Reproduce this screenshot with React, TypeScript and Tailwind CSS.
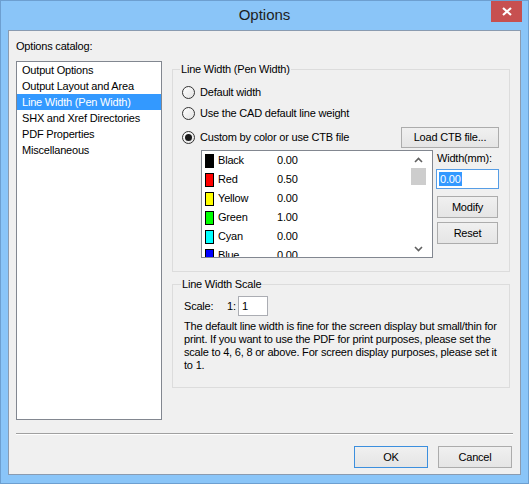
import React from "react";

const catalog = [
  "Output Options",
  "Output Layout and Area",
  "Line Width (Pen Width)",
  "SHX and Xref Directories",
  "PDF Properties",
  "Miscellaneous",
];

const pens = [
  { name: "Black", swatch: "bg-[#000000]", width: "0.00" },
  { name: "Red", swatch: "bg-[#ff0000]", width: "0.50" },
  { name: "Yellow", swatch: "bg-[#ffff00]", width: "0.00" },
  { name: "Green", swatch: "bg-[#00ff00]", width: "1.00" },
  { name: "Cyan", swatch: "bg-[#00ffff]", width: "0.00" },
  { name: "Blue", swatch: "bg-[#0000ff]", width: "0.00" },
];

function Radio({ checked = false }: { checked?: boolean }) {
  return (
    <span className="flex h-[13px] w-[13px] shrink-0 items-center justify-center rounded-full border border-[#333333] bg-linear-to-br from-[#ffffff] to-[#e3e3e3]">
      {checked && <span className="h-[7px] w-[7px] rounded-full bg-[#1a1a1a]" />}
    </span>
  );
}

function Button({
  label,
  className = "",
  primary = false,
}: {
  label: string;
  className?: string;
  primary?: boolean;
}) {
  return (
    <button
      className={`flex items-center justify-center border bg-linear-to-b from-[#f0f0f0] to-[#e5e5e5] leading-[13px] text-black ${
        primary ? "border-[#3c8fde]" : "border-[#acacac]"
      } ${className}`}
    >
      {label}
    </button>
  );
}

function Group({
  title,
  className = "",
  labelLeft = "left-[7px]",
  children,
}: {
  title: string;
  className?: string;
  labelLeft?: string;
  children: React.ReactNode;
}) {
  return (
    <div className={`relative border border-[#dcdcdc] ${className}`}>
      <span className={`absolute -top-[7px] ${labelLeft} bg-[#f0f0f0] px-[1px] leading-[13px]`}>
        {title}
      </span>
      {children}
    </div>
  );
}

function Chevron({ up }: { up?: boolean }) {
  return (
    <svg width="9" height="6" viewBox="0 0 9 6">
      <polyline
        points={up ? "1,5 4.5,1.5 8,5" : "1,1 4.5,4.5 8,1"}
        fill="none"
        stroke="#606060"
        strokeWidth="1.6"
      />
    </svg>
  );
}

export default function App() {
  return (
    <div className="h-[484px] w-[529px] overflow-hidden bg-white">
      {/* window frame */}
      <div className="relative flex h-[484px] w-[529px] flex-col border border-[#6d9fd0] bg-[#8ac5f8]">
        {/* title bar */}
        <div className="flex h-[29px] shrink-0 items-center justify-center font-['Liberation_Sans',Arial,sans-serif] text-[15px] text-[#1e1e1e]">
          Options
        </div>
        <div className="absolute right-[6px] top-0 flex h-[21px] w-[31px] items-center justify-center bg-[#c75050]">
          <svg width="10" height="9" viewBox="0 0 10 9">
            <path d="M1 1 L9 8 M9 1 L1 8" stroke="#ffffff" strokeWidth="2.2" />
          </svg>
        </div>

        {/* client area */}
        <div className="mx-[7px] flex h-[445px] flex-col border border-[#8a9bb0] bg-[#f0f0f0] pl-[7px] pt-[9px] font-['Liberation_Sans',Arial,sans-serif] text-[11px] tracking-[-0.2px] text-black">
          <div className="flex">
            {/* catalog */}
            <div className="flex w-[146px] flex-col">
              <div className="h-[21px] leading-[13px]">Options catalog:</div>
              <div className="h-[359px] border border-[#828790] bg-white">
                {catalog.map((item, i) => (
                  <div
                    key={item}
                    className={`h-[16px] whitespace-nowrap pl-[5px] leading-[16px] ${
                      i === 2 ? "bg-[#3399ff] text-white" : ""
                    }`}
                  >
                    {item}
                  </div>
                ))}
              </div>
            </div>

            {/* right side */}
            <div className="ml-[10px] flex w-[338px] flex-col pt-[29px]">
              <Group title="Line Width (Pen Width)" className="h-[203px]">
                <div className="flex flex-col pt-[12px]">
                  <div className="flex h-[21px] items-center gap-[5px] pl-[9px]">
                    <Radio />
                    <span className="leading-[13px]">Default width</span>
                  </div>
                  <div className="flex h-[21px] items-center gap-[5px] pl-[9px]">
                    <Radio />
                    <span className="leading-[13px]">Use the CAD default line weight</span>
                  </div>
                  <div className="mt-[3px] flex h-[21px] items-center justify-between pl-[9px] pr-[10px]">
                    <div className="flex items-center gap-[5px]">
                      <Radio checked />
                      <span className="leading-[13px]">Custom by color or use CTB file</span>
                    </div>
                    <Button label="Load CTB file..." className="h-[21px] w-[98px]" />
                  </div>

                  <div className="ml-[28px] mt-[2px] flex">
                    {/* pen list */}
                    <div className="flex h-[108px] w-[232px] overflow-hidden border border-[#828790] bg-white">
                      <div className="flex-1 overflow-hidden">
                        {pens.map((p) => (
                          <div key={p.name} className="flex h-[19px] shrink-0 items-center pl-[3px]">
                            <span className={`h-[14px] w-[9px] shrink-0 border border-black ${p.swatch}`} />
                            <span className="ml-[4px] w-[59px] leading-[13px]">{p.name}</span>
                            <span className="leading-[13px]">{p.width}</span>
                          </div>
                        ))}
                      </div>
                      <div className="mr-[5px] flex w-[17px] flex-col items-center">
                        <div className="flex h-[17px] w-full items-center justify-center">
                          <Chevron up />
                        </div>
                        <div className="h-[17px] w-[15px] bg-[#cdcdcd]" />
                        <div className="flex-1" />
                        <div className="flex h-[17px] w-full items-center justify-center">
                          <Chevron />
                        </div>
                      </div>
                    </div>

                    {/* width controls */}
                    <div className="ml-[3px] flex flex-col">
                      <div className="h-[19px] pl-[1px] pt-[2px] leading-[13px]">Width(mm):</div>
                      <div className="flex h-[20px] w-[63px] items-center border border-[#569de5] bg-white pl-[2px]">
                        <span className="bg-[#3399ff] px-[1px] leading-[14px] text-white">0.00</span>
                      </div>
                      <Button label="Modify" className="ml-[1px] mt-[7px] h-[22px] w-[61px]" />
                      <Button label="Reset" className="ml-[1px] mt-[4px] h-[22px] w-[61px]" />
                    </div>
                  </div>
                </div>
              </Group>

              <Group title="Line Width Scale" labelLeft="left-[8px]" className="mt-[12px] h-[104px]">
                <div className="flex flex-col pl-[11px] pt-[11px]">
                  <div className="flex h-[20px] items-center">
                    <span className="w-[43px] leading-[13px]">Scale:</span>
                    <span className="w-[11px] leading-[13px]">1:</span>
                    <div className="flex h-[20px] w-[30px] items-center border border-[#abadb3] bg-white pl-[3px]">
                      <span className="leading-[13px]">1</span>
                    </div>
                  </div>
                  <p className="mt-[4px] whitespace-nowrap leading-[13px]">
                    The default line width is fine for the screen display but small/thin for
                    <br />
                    print. If you want to use the PDF for print purposes, please set the
                    <br />
                    scale to 4, 6, 8 or above. For screen display purposes, please set it
                    <br />
                    to 1.
                  </p>
                </div>
              </Group>
            </div>
          </div>

          {/* separator */}
          <div className="mt-[13px] h-[2px] w-[497px] border-b border-t border-b-white border-t-[#a0a0a0]" />

          {/* dialog buttons */}
          <div className="mt-[11px] flex w-[496px] justify-end gap-[10px]">
            <Button label="OK" primary className="h-[22px] w-[74px]" />
            <Button label="Cancel" className="h-[22px] w-[74px]" />
          </div>
        </div>
      </div>
    </div>
  );
}
